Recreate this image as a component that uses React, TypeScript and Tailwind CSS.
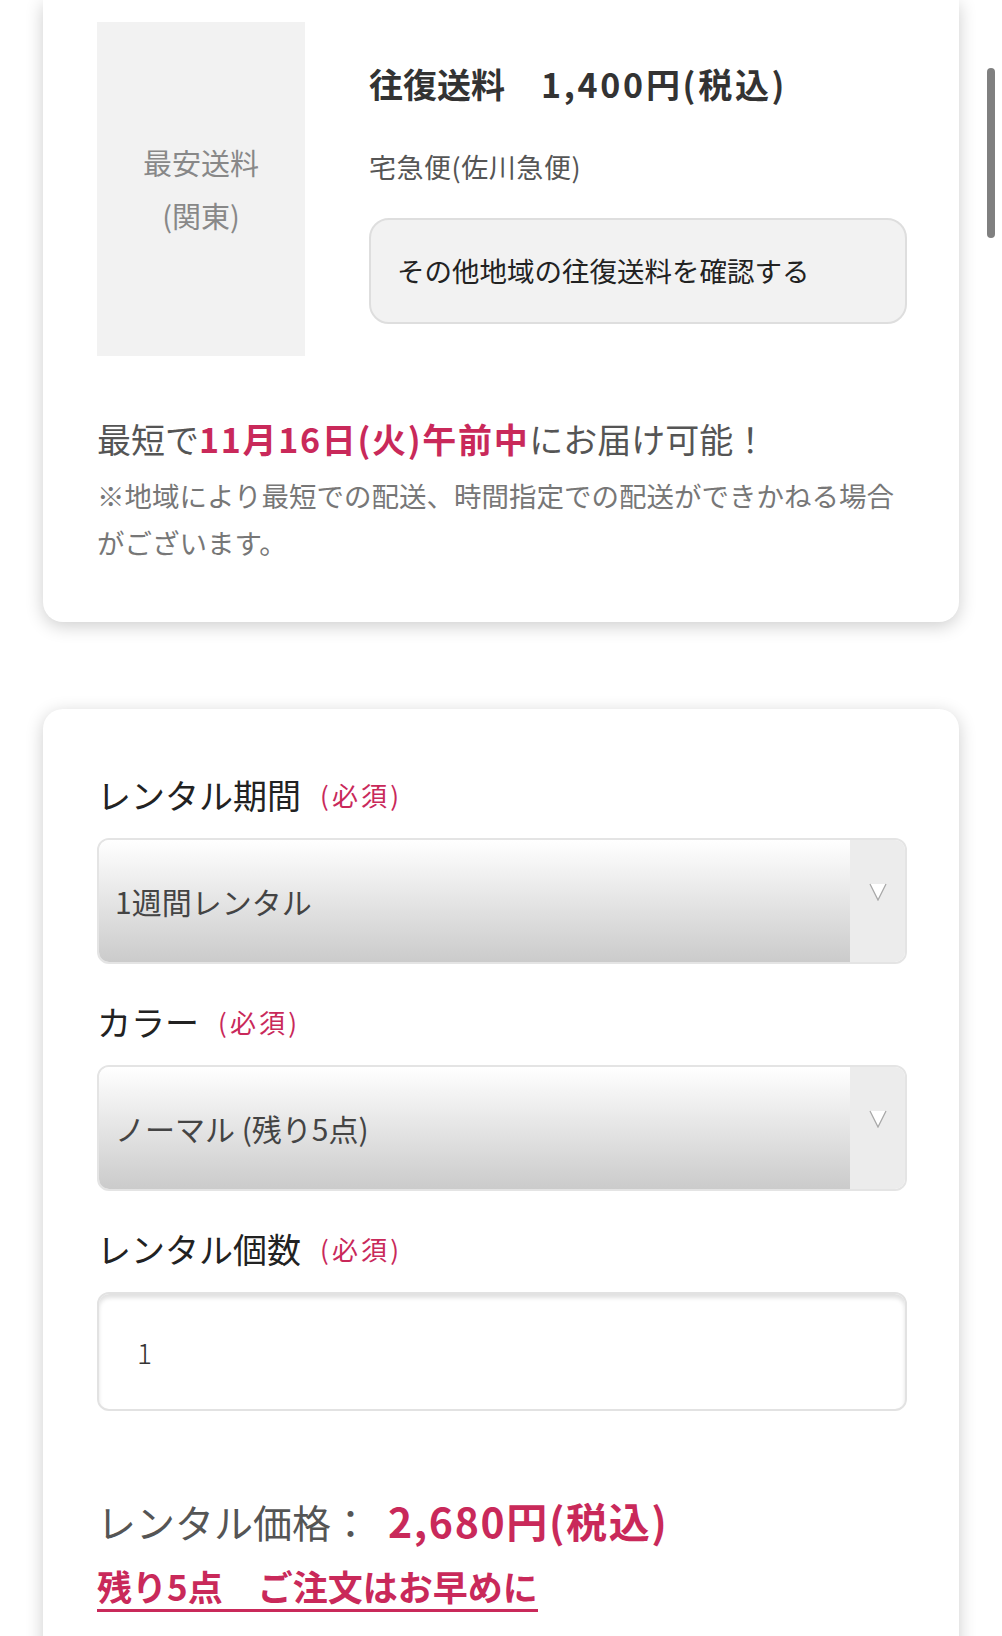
const FONT = { fontFamily: '"Noto Sans CJK JP", "Noto Sans", sans-serif' };

const Required = () => (
  <span className="ml-[19px] text-[26px] leading-none tracking-[0.12em] text-[#c9295a]">(必須)</span>
);

const Arrow = () => (
  <svg width="18" height="18" viewBox="0 0 18 18" className="-mt-[18px]">
    <path d="M1 1 L9 17 L17 1 Z" fill="#ffffff" />
    <path d="M1 1 L9 17 L17 1" fill="none" stroke="#a8a8a8" strokeWidth="1.3" />
  </svg>
);

const SelectBox = ({ value }: { value: string }) => (
  <div className="flex h-[126px] overflow-hidden rounded-[12px] border-2 border-[#e4e4e4]">
    <div className="flex flex-1 items-center bg-gradient-to-b from-[#ffffff] to-[#cbcbcb] pl-[16px] text-[30px] text-[#444]">
      {value}
    </div>
    <div className="flex w-[55px] items-center justify-center bg-[#ececec]">
      <Arrow />
    </div>
  </div>
);

export default function App() {
  const fields = [
    { label: 'レンタル期間', value: '1週間レンタル' },
    { label: 'カラー', value: 'ノーマル (残り5点)' },
  ];

  return (
    <div className="relative h-[1636px] w-full overflow-hidden bg-white px-[43px]" style={FONT}>
      {/* shipping card */}
      <div className="rounded-b-[20px] bg-white pb-[56px] pl-[54px] pr-[52px] pt-[22px] shadow-[0_4px_18px_rgba(0,0,0,0.2)]">
        <div className="flex">
          <div className="flex h-[334px] w-[208px] shrink-0 flex-col items-center justify-center bg-[#f2f2f2] text-[29px] leading-[53px] text-[#888]">
            <span>最安送料</span>
            <span>(関東)</span>
          </div>
          <div className="ml-[64px] flex flex-1 flex-col pt-[42px]">
            <div className="flex items-baseline text-[34px] font-bold leading-[40px] text-[#333]">
              <span>往復送料</span>
              <span className="ml-[36px] tracking-[0.08em]">1,400円(税込)</span>
            </div>
            <div className="mt-[45px] text-[27px] leading-[36px] tracking-[0.02em] text-[#555]">宅急便(佐川急便)</div>
            <button className="mt-[33px] flex h-[106px] items-center rounded-[20px] border-2 border-[#dedede] bg-[#f2f2f2] pl-[26px] text-left text-[27.5px] text-[#222]">
              その他地域の往復送料を確認する
            </button>
          </div>
        </div>
        <p className="mt-[61px] text-[34px] leading-[44px] text-[#555]">
          最短で<span className="font-bold tracking-[0.05em] text-[#c9295a]">11月16日(火)午前中</span>にお届け可能！
        </p>
        <p className="mt-[11px] text-[27.5px] leading-[47px] text-[#777]">
          ※地域により最短での配送、時間指定での配送ができかねる場合がございます。
        </p>
      </div>

      {/* order card */}
      <div className="mt-[87px] h-[1000px] rounded-[20px] bg-white pl-[54px] pr-[52px] pt-[64px] shadow-[0_4px_18px_rgba(0,0,0,0.2)]">
        {fields.map((f, i) => (
          <div key={f.label} className={i > 0 ? 'mt-[36px]' : ''}>
            <div className="flex items-center text-[34px] leading-[44px] text-[#222]">
              {f.label}
              <Required />
            </div>
            <div className="mt-[21px]">
              <SelectBox value={f.value} />
            </div>
          </div>
        ))}

        <div className="mt-[36px]">
          <div className="flex items-center text-[34px] leading-[44px] text-[#222]">
            レンタル個数
            <Required />
          </div>
          <div className="mt-[21px] flex h-[119px] items-center rounded-[12px] border-2 border-[#e2e2e2] bg-white pl-[38px] text-[28px] font-light text-[#333] shadow-[inset_0_4px_4px_rgba(0,0,0,0.12)]">
            1
          </div>
        </div>

        <div className="mt-[83px] flex items-baseline text-[39px] leading-[52px]">
          <span className="text-[#555]">レンタル価格：</span>
          <span className="ml-[18px] text-[41px] font-bold tracking-[0.04em] text-[#c9295a]">2,680円(税込)</span>
        </div>
        <div className="mt-[17px] inline-block border-b-[3px] border-[#c9295a] pb-[1px] text-[35px] font-bold leading-[44px] text-[#c9295a]">
          残り5点　ご注文はお早めに
        </div>
      </div>

      {/* scroll indicator */}
      <div className="absolute right-[7px] top-[68px] h-[170px] w-[8px] rounded-full bg-[#808080]" />
    </div>
  );
}
